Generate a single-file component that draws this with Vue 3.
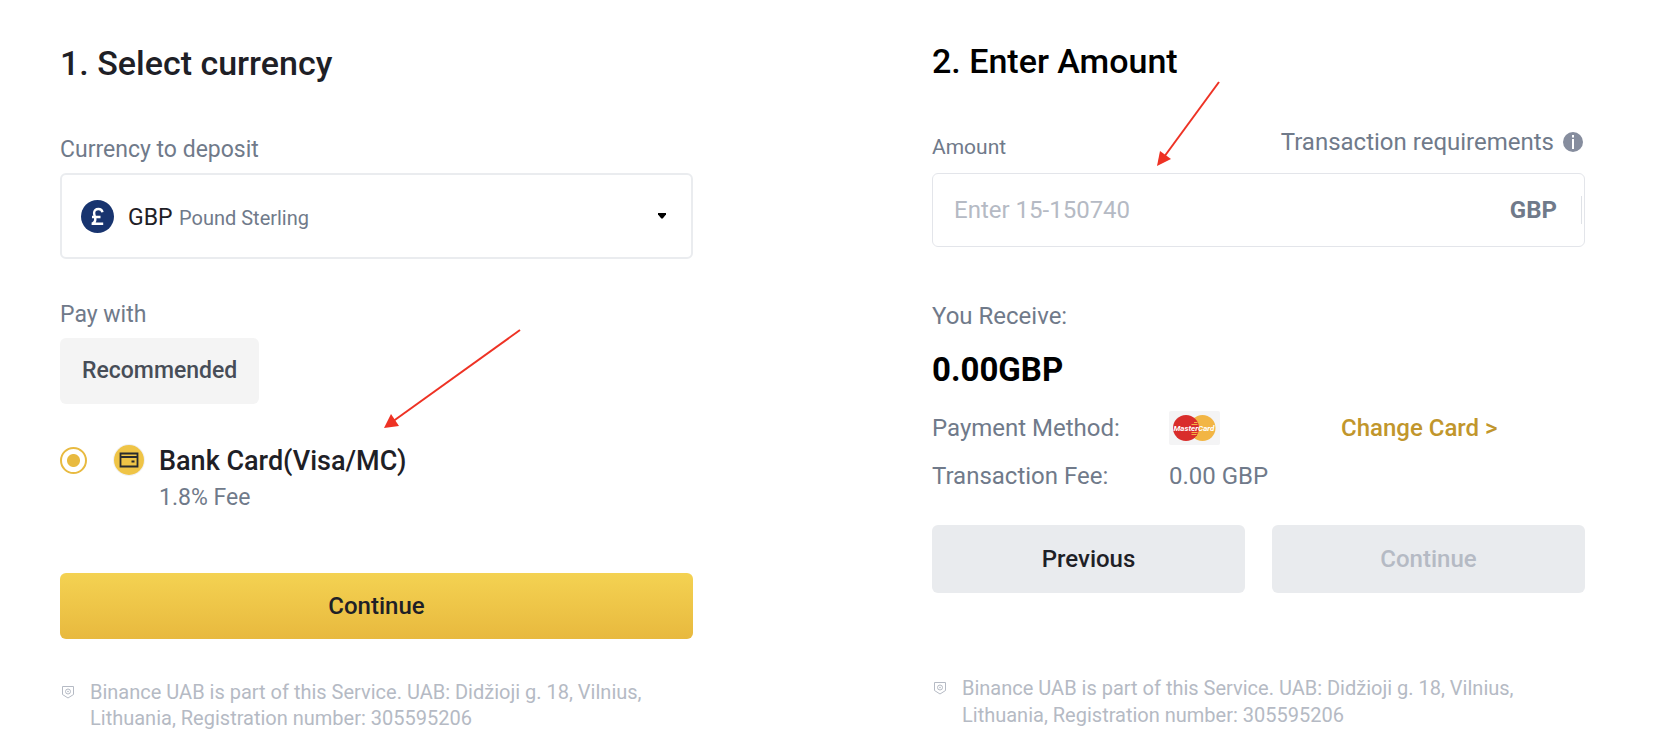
<script setup>
import { ref } from 'vue'

const currency = ref('GBP')
const method = ref('card')
const amount = ref('')
const notice = 'Binance UAB is part of this Service. UAB: Didžioji g. 18, Vilnius, Lithuania, Registration number: 305595206'
</script>

<template>
  <main class="page">
    <section class="panel first">
      <h2 class="title">1. Select currency</h2>

      <label class="label" for="currency">Currency to deposit</label>
      <div class="select-box">
        <select id="currency" v-model="currency">
          <option value="GBP">GBP</option>
        </select>
        <div class="select-face">
          <svg class="coin" viewBox="0 0 33 33" aria-hidden="true">
            <circle cx="16.500" cy="16.500" r="16.500" fill="#18346f" />
            <path d="M21.500 12.200C21 10 19.500 9 17.400 9c-2.700 0-4.300 1.600-4.300 4 0 2.300 1.200 3.400 1.200 6 0 2.200-1 3.700-2.500 4.300v.5h10.400M11 17h8.500" fill="none" stroke="#fff" stroke-width="2.400" />
          </svg>
          <span class="currency-name">Pound Sterling</span>
          <svg class="caret" viewBox="0 0 8 6" aria-hidden="true"><path d="M0 0h8v1.500L4.700 5.500H3.300L0 1.500z" fill="#000" /></svg>
        </div>
      </div>

      <p class="label pay-label">Pay with</p>
      <button type="button" class="chip">Recommended</button>

      <div class="method">
        <input id="card" v-model="method" type="radio" name="method" value="card" />
        <svg class="wallet" viewBox="0 0 32 32" aria-hidden="true">
          <circle cx="16" cy="16" r="16" fill="#f1f1f2" />
          <circle cx="16" cy="16" r="15" fill="#efc446" />
          <path d="M7.500 9.500h17v13h-17zM7.500 13h17" fill="none" stroke="#292b2e" stroke-width="1.800" />
          <path d="M18.500 16.500h3v2h-3z" fill="#292b2e" />
        </svg>
        <label class="method-name" for="card">Bank Card(Visa/MC)</label>
        <span class="method-fee">1.8% Fee</span>
      </div>

      <button type="button" class="btn primary">Continue</button>

      <footer class="notice">
        <svg viewBox="0 0 12 14" aria-hidden="true">
          <path d="M.500 1.500h11v8L6 13 .500 9.500z" fill="none" stroke="#b5bac4" />
          <circle cx="6" cy="6.500" r="2.500" fill="none" stroke="#b5bac4" />
          <circle cx="6" cy="6.500" r=".8" fill="#b5bac4" />
        </svg>
        <p>{{ notice }}</p>
      </footer>

      <svg class="arrow arrow-card" viewBox="0 0 140 102" aria-hidden="true">
        <path d="M138 2L10 94" stroke="#ee3224" stroke-width="2" />
        <path d="M2 100L9 86l8 12z" fill="#ee3224" />
      </svg>
    </section>

    <section class="panel second">
      <h2 class="title">2. Enter Amount</h2>

      <div class="label-row">
        <label class="amount-label" for="amount">Amount</label>
        <a class="requirements" href="#">
          Transaction requirements
          <svg viewBox="0 0 20 20" aria-hidden="true">
            <circle cx="10" cy="10" r="10" fill="#868d9e" />
            <path d="M10 3v2.500M10 7v10" stroke="#fff" stroke-width="2" />
          </svg>
        </a>
      </div>
      <div class="amount-box">
        <input id="amount" v-model="amount" type="text" inputmode="decimal" placeholder="Enter 15-150740" />
        <span class="unit">GBP</span>
        <span class="divider"></span>
      </div>

      <p class="label receive-label">You Receive:</p>
      <p class="receive">0.00GBP</p>

      <dl class="details">
        <dt>Payment Method:</dt>
        <dd>
          <svg class="mastercard" viewBox="0 0 51 34" role="img" aria-label="MasterCard">
            <rect width="51" height="34" rx="2" fill="#f4f4f5" />
            <circle cx="33.500" cy="17" r="13" fill="#f2b544" />
            <circle cx="17" cy="17" r="13" fill="#d92d2b" />
            <path d="M25 11.500h3.500M22.500 13.500h6M22.500 21.500h6M22.500 23.500h5" stroke="#f2b544" />
            <path d="M23 12.500h5M23 22.500h5M24 24.500h4" stroke="#d92d2b" />
            <text x="25" y="20" text-anchor="middle" class="mastercard-name">MasterCard</text>
          </svg>
        </dd>
        <dd><a class="change" href="#">Change Card &gt;</a></dd>
        <dt>Transaction Fee:</dt>
        <dd>0.00 GBP</dd>
      </dl>

      <div class="actions">
        <button type="button" class="btn">Previous</button>
        <button type="button" class="btn" disabled>Continue</button>
      </div>

      <footer class="notice">
        <svg viewBox="0 0 12 14" aria-hidden="true">
          <path d="M.500 1.500h11v8L6 13 .500 9.500z" fill="none" stroke="#b5bac4" />
          <circle cx="6" cy="6.500" r="2.500" fill="none" stroke="#b5bac4" />
          <circle cx="6" cy="6.500" r=".8" fill="#b5bac4" />
        </svg>
        <p>{{ notice }}</p>
      </footer>

      <svg class="arrow arrow-amount" viewBox="0 0 66 88" aria-hidden="true">
        <path d="M64 2L9 77" stroke="#ee3224" stroke-width="2" />
        <path d="M2 86L5 71l11 8z" fill="#ee3224" />
      </svg>
    </section>
  </main>
</template>

<style>
body {
  margin: 0;
  background: #fff;
}
</style>

<style scoped>
.page {
  box-sizing: border-box;
  display: grid;
  grid-template-columns: 633fr 653fr;
  column-gap: 239px;
  padding: 41px 79px 24px 60px;
  font-family: Roboto, "Liberation Sans", sans-serif;
  font-size: 24px;
  line-height: 32px;
  color: #707a8a;
}

.panel {
  position: relative;
  display: flex;
  flex-direction: column;
}

.panel.first {
  padding-top: 2px;
  font-size: 23px;
}

h2, p, dl, dd {
  margin: 0;
}

button, input, select {
  font: inherit;
}

.title {
  font-size: 34px;
  line-height: 40px;
  font-weight: 500;
  color: #1e2026;
}

.second .title {
  color: #000;
}

.label {
  margin-top: 51px;
  margin-bottom: 7px;
}

.select-box {
  display: grid;
  height: 86px;
}

.select-box > * {
  grid-area: 1 / 1;
}

.select-box select {
  appearance: none;
  padding: 4px 66px 0;
  border: 2px solid #eaecef;
  border-radius: 6px;
  background: #fff;
  color: #1e2026;
}

.select-face {
  display: flex;
  align-items: center;
  padding: 0 27px 0 21px;
  pointer-events: none;
}

.coin {
  width: 33px;
  height: 33px;
}

.currency-name {
  flex: 1;
  margin-left: 65px;
  padding-top: 4px;
  font-size: 20px;
}

.caret {
  width: 8px;
  height: 6px;
}

.pay-label {
  margin-top: 40px;
}

.chip {
  align-self: flex-start;
  height: 66px;
  padding: 0 22px;
  border: 0;
  border-radius: 6px;
  background: #f4f4f4;
  font-weight: 500;
  color: #474d57;
}

.method {
  display: grid;
  grid-template-columns: 53px 46px 1fr;
  align-items: center;
  row-gap: 3px;
  margin: 39px 0 59px;
}

.method input {
  appearance: none;
  box-sizing: border-box;
  width: 27px;
  height: 27px;
  margin: 0 0 2px;
  border: 2px solid #e8ba40;
  border-radius: 50%;
  background: #fff;
}

.method input:checked {
  background: radial-gradient(circle, #e8ba40 6px, #fff 7px);
}

.wallet {
  width: 32px;
  height: 32px;
  margin-bottom: 2px;
}

.method-name {
  font-size: 27px;
  line-height: 36px;
  font-weight: 500;
  color: #1e2026;
}

.method-fee {
  grid-column: 3;
}

.btn {
  height: 68px;
  padding: 0;
  border: 0;
  border-radius: 6px;
  background: #e9ebee;
  font-weight: 500;
  color: #1e2026;
}

.btn.primary {
  height: 66px;
  background: linear-gradient(#f4d252, #e8b93e);
  font-size: 24px;
}

.btn:disabled {
  color: #b5bac4;
}

.notice {
  display: flex;
  gap: 16px;
  margin-top: 40px;
  padding: 0 40px 0 2px;
  font-size: 20px;
  line-height: 26px;
  color: #b5bac4;
}

.notice svg {
  flex: none;
  width: 12px;
  height: 14px;
  margin-top: 6px;
}

.second .notice {
  margin-top: 82px;
  line-height: 27px;
}

.label-row {
  display: flex;
  justify-content: space-between;
  margin-top: 45px;
  margin-bottom: 10px;
}

.amount-label {
  margin-top: 5px;
  font-size: 21px;
}

.requirements {
  display: flex;
  align-items: center;
  align-self: flex-start;
  gap: 9px;
  padding-right: 2px;
  color: inherit;
  text-decoration: none;
}

.requirements svg {
  width: 20px;
  height: 20px;
}

.amount-box {
  box-sizing: border-box;
  display: flex;
  align-items: center;
  height: 74px;
  padding: 0 2px 0 21px;
  border: 1px solid #e3e5ea;
  border-radius: 6px;
}

.amount-box input {
  flex: 1;
  min-width: 0;
  padding: 0;
  border: 0;
  outline: 0;
  background: none;
  color: #1e2026;
}

.amount-box input::placeholder {
  color: #b5bac4;
  opacity: 1;
}

.unit {
  font-weight: 700;
}

.divider {
  width: 1px;
  height: 28px;
  margin-left: 24px;
  background: #dfe2e7;
}

.receive-label {
  margin-top: 53px;
  margin-bottom: 18px;
}

.receive {
  font-size: 33px;
  line-height: 40px;
  font-weight: 700;
  color: #000;
}

.details {
  display: grid;
  grid-template-columns: 237px 172px 1fr;
  row-gap: 16px;
  margin-top: 22px;
}

.mastercard {
  display: block;
  width: 51px;
  height: 34px;
  margin: -1px 0;
}

.mastercard-name {
  font: italic 700 8px Roboto, sans-serif;
  fill: #fff;
}

.change {
  font-weight: 500;
  color: #c1962c;
  text-decoration: none;
}

.actions {
  display: grid;
  grid-template-columns: 1fr 1fr;
  gap: 27px;
  margin-top: 33px;
}

.arrow {
  position: absolute;
  fill: none;
  pointer-events: none;
}

.arrow-card {
  top: 287px;
  left: 322px;
  width: 140px;
  height: 102px;
}

.arrow-amount {
  top: 39px;
  left: 223px;
  width: 66px;
  height: 88px;
}
</style>
